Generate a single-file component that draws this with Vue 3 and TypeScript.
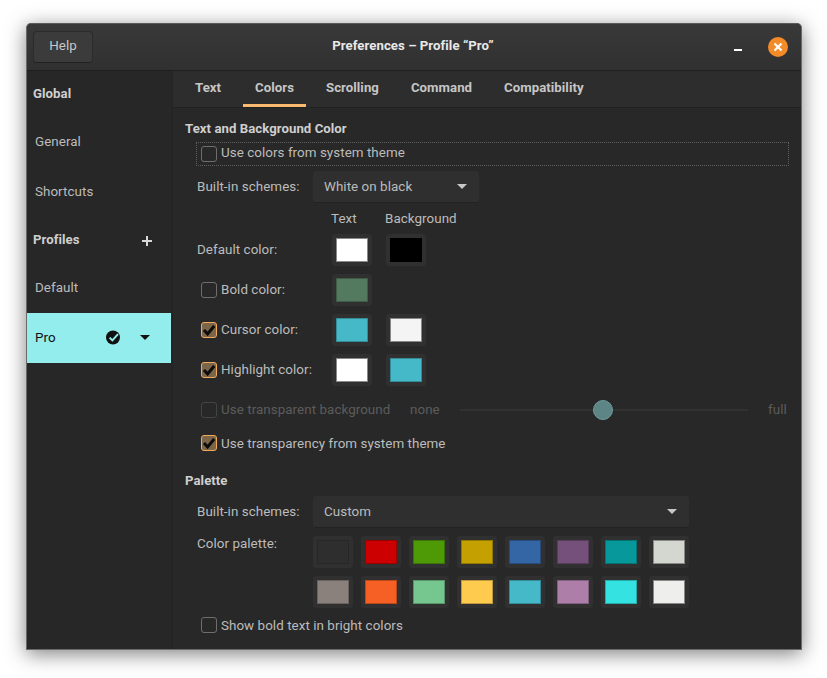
<script setup lang="ts">
interface ColorRow {
  label: string
  check: 'none' | 'off' | 'on'
  colors: string[]
}

const colorRows: ColorRow[] = [
  { label: 'Default color:', check: 'none', colors: ['#ffffff', '#000000'] },
  { label: 'Bold color:', check: 'off', colors: ['#537a5f'] },
  { label: 'Cursor color:', check: 'on', colors: ['#46b9c9', '#f4f4f4'] },
  { label: 'Highlight color:', check: 'on', colors: ['#ffffff', '#46b9c9'] },
]

const paletteRows = [
  ['#2e2e2e', '#cc0000', '#4e9a06', '#c4a000', '#3465a4', '#75507b', '#06989a', '#d3d7cf'],
  ['#8a817c', '#f66024', '#76c68f', '#ffcb4f', '#46b9c9', '#ad7fa8', '#34e2e2', '#eeeeec'],
]

const tabs = ['Text', 'Colors', 'Scrolling', 'Command', 'Compatibility']

// inner swatch border is just a darker version of the fill
function borderOf(hex: string) {
  if (hex === '#ffffff' || hex === '#f4f4f4' || hex === '#eeeeec' || hex === '#d3d7cf') return '#888888'
  if (hex === '#2e2e2e') return '#262626'
  const n = parseInt(hex.slice(1), 16)
  const r = Math.round(((n >> 16) & 255) * 0.75)
  const g = Math.round(((n >> 8) & 255) * 0.75)
  const b = Math.round((n & 255) * 0.75)
  return `rgb(${r}, ${g}, ${b})`
}
</script>

<template>
  <div class="page">
    <div class="window">
      <header class="titlebar">
        <button class="help">Help</button>
        <div class="title">Preferences – Profile “Pro”</div>
        <div class="controls">
          <span class="minimize"></span>
          <span class="close">
            <svg width="10" height="10" viewBox="0 0 10 10">
              <path d="M1.5 1.5l7 7M8.5 1.5l-7 7" stroke="#fff" stroke-width="2.2" fill="none" />
            </svg>
          </span>
        </div>
      </header>

      <div class="body">
        <aside class="sidebar">
          <div class="side-head first">Global</div>
          <div class="side-item">General</div>
          <div class="side-item">Shortcuts</div>
          <div class="side-head profiles">
            <span>Profiles</span>
            <svg class="plus" width="10" height="10" viewBox="0 0 10 10">
              <path d="M5 0v10M0 5h10" stroke="#d8d8d8" stroke-width="2" fill="none" />
            </svg>
          </div>
          <div class="side-item">Default</div>
          <div class="side-item active">
            <span class="pro-name">Pro</span>
            <svg class="pro-check" width="15" height="15" viewBox="0 0 15 15">
              <circle cx="7" cy="7.5" r="7" fill="#111" />
              <path d="M3.6 7.6l2.8 2.8 5.6-6.2" stroke="#93eded" stroke-width="2" fill="none" />
            </svg>
            <span class="pro-arrow"></span>
          </div>
        </aside>

        <main class="content">
          <nav class="tabs">
            <div v-for="t in tabs" :key="t" class="tab" :class="{ current: t === 'Colors' }">{{ t }}</div>
          </nav>

          <div class="pane">
            <div class="section-title">Text and Background Color</div>
            <div class="system-row">
              <span class="check"></span>
              <span class="lift">Use colors from system theme</span>
            </div>

            <div class="row scheme-row">
              <span class="label lift">Built-in schemes:</span>
              <div class="select small">
                <span class="lift-small">White on black</span>
                <span class="arrow"></span>
              </div>
            </div>

            <div class="col-heads">
              <span class="head-text">Text</span>
              <span>Background</span>
            </div>

            <div class="color-rows">
              <div v-for="row in colorRows" :key="row.label" class="color-row">
                <div class="color-label" :class="{ plain: row.check === 'none' }">
                  <span v-if="row.check !== 'none'" class="check" :class="{ on: row.check === 'on' }">
                    <svg v-if="row.check === 'on'" width="14" height="14" viewBox="0 0 14 14">
                      <path d="M2 7l3.6 4 6.6-8" stroke="#0c0c0c" stroke-width="3" fill="none" />
                    </svg>
                  </span>
                  <span class="lift">{{ row.label }}</span>
                </div>
                <div class="swatches">
                  <div v-for="(c, i) in row.colors" :key="i" class="swatch">
                    <div class="swatch-fill" :style="{ backgroundColor: c, borderColor: borderOf(c) }"></div>
                  </div>
                </div>
              </div>
            </div>

            <div class="slider-row">
              <span class="check disabled"></span>
              <span class="dim transparent-label lift">Use transparent background</span>
              <span class="dim none lift">none</span>
              <div class="track"><span class="thumb"></span></div>
              <span class="dim lift">full</span>
            </div>

            <div class="check-row transparency">
              <span class="check on">
                <svg width="14" height="14" viewBox="0 0 14 14">
                  <path d="M2 7l3.6 4 6.6-8" stroke="#0c0c0c" stroke-width="3" fill="none" />
                </svg>
              </span>
              <span>Use transparency from system theme</span>
            </div>

            <div class="section-title palette-title">Palette</div>

            <div class="row palette-scheme">
              <span class="label lift">Built-in schemes:</span>
              <div class="select wide">
                <span class="lift-small">Custom</span>
                <span class="arrow"></span>
              </div>
            </div>

            <div class="palette">
              <span class="label palette-label">Color palette:</span>
              <div class="palette-grid">
                <div v-for="(line, r) in paletteRows" :key="r" class="palette-line">
                  <div v-for="c in line" :key="c" class="swatch">
                    <div class="swatch-fill" :style="{ backgroundColor: c, borderColor: borderOf(c) }"></div>
                  </div>
                </div>
              </div>
            </div>

            <div class="check-row bright">
              <span class="check"></span>
              <span>Show bold text in bright colors</span>
            </div>
          </div>
        </main>
      </div>
    </div>
  </div>
</template>

<style>
html,
body {
  margin: 0;
  background: #ffffff;
}
</style>

<style scoped>
.page {
  box-sizing: border-box;
  height: 678px;
  padding: 23px 0 0 26px;
  background: #ffffff;
}

.window {
  box-sizing: border-box;
  width: 776px;
  height: 627px;
  display: flex;
  flex-direction: column;
  border: 1px solid #6a6a6a;
  border-top-color: #5a5a5a;
  border-radius: 5px 5px 0 0;
  background: #282828;
  box-shadow: 0 4px 20px rgba(0, 0, 0, 0.5);
  font-family: Roboto, "Noto Sans", sans-serif;
  font-size: 13.4px;
  letter-spacing: 0.05px;
  color: #bcbcbc;
  overflow: hidden;
}

.lift {
  padding-bottom: 2px;
}

.lift-small {
  padding-bottom: 1px;
}

.titlebar {
  flex: none;
  box-sizing: border-box;
  height: 47px;
  display: flex;
  align-items: center;
  padding: 0 8px 1px 6px;
  background: linear-gradient(#393939, #303030);
  border-bottom: 1px solid #1f1f1f;
}

.help {
  width: 60px;
  height: 32px;
  padding: 0 0 2px;
  border: 1px solid #2b2b2b;
  border-bottom-color: #222222;
  border-radius: 4px;
  background: #3b3b3b;
  color: #c8c8c8;
  font: inherit;
}

.title {
  flex: 1;
  padding-bottom: 2px;
  text-align: center;
  font-weight: 700;
  font-size: 13.2px;
  color: #e8e8e8;
}

.controls {
  width: 60px;
  display: flex;
  align-items: center;
  justify-content: space-between;
}

.minimize {
  display: block;
  width: 8px;
  height: 2px;
  margin: 7px 0 0 1px;
  background: #ffffff;
}

.close {
  width: 20px;
  height: 20px;
  margin-right: 5px;
  border-radius: 50%;
  background: #f38b29;
  display: flex;
  align-items: center;
  justify-content: center;
}

.body {
  flex: 1;
  display: flex;
  min-height: 0;
}

.sidebar {
  flex: none;
  box-sizing: border-box;
  width: 146px;
  background: #272727;
  border-right: 1px solid #232323;
}

.side-head {
  box-sizing: border-box;
  height: 46px;
  display: flex;
  align-items: center;
  padding: 0 0 2px 6px;
  font-weight: 700;
  font-size: 13.2px;
  color: #cfcfcf;
}

.profiles {
  justify-content: space-between;
  padding-right: 20px;
}

.plus {
  margin-top: 3px;
}

.side-item {
  box-sizing: border-box;
  height: 50px;
  display: flex;
  align-items: center;
  padding: 0 0 2px 8px;
}

.side-item.active {
  width: 144px;
  color: #111111;
  background: #93eded;
}

.pro-name {
  width: 71px;
}

.pro-arrow {
  margin-left: 19px;
  border-left: 5px solid transparent;
  border-right: 5px solid transparent;
  border-top: 5px solid #111111;
}

.content {
  flex: 1;
  min-width: 0;
  display: flex;
  flex-direction: column;
}

.tabs {
  flex: none;
  box-sizing: border-box;
  height: 37px;
  display: flex;
  gap: 8px;
  padding-left: 10px;
  background: #2d2d2d;
  border-bottom: 1px solid #212121;
}

.tab {
  box-sizing: border-box;
  height: 36px;
  padding: 0 12px;
  display: flex;
  align-items: center;
  font-weight: 700;
  font-size: 13.2px;
  color: #c6c6c6;
  border-bottom: 3px solid transparent;
}

.tab:first-child {
  margin-right: 2px;
}

.tab.current {
  border-bottom-color: #f9b96e;
}

.pane {
  flex: 1;
  padding: 10px 12px 0;
}

.section-title {
  height: 20px;
  line-height: 22px;
  font-weight: 700;
  font-size: 13.2px;
  color: #cfcfcf;
}

.check {
  flex: none;
  box-sizing: border-box;
  width: 16px;
  height: 16px;
  display: flex;
  align-items: center;
  justify-content: center;
  border: 1px solid #6e6e6e;
  border-radius: 3px;
}

.check.on {
  background: #7b6548;
  border-color: #f2a95c;
}

.check.disabled {
  border-color: #444444;
}

.system-row {
  box-sizing: border-box;
  height: 24px;
  margin: 4px 0 0 11px;
  width: 593px;
  display: flex;
  align-items: center;
  gap: 4px;
  padding: 0 0 1px 4px;
  border: 1px dotted #5e5e5e;
}

.row {
  display: flex;
  align-items: center;
  margin-left: 12px;
}

.scheme-row {
  margin-top: 5px;
}

.label {
  flex: none;
  width: 116px;
}

.select {
  box-sizing: border-box;
  height: 32px;
  display: flex;
  align-items: center;
  justify-content: space-between;
  padding: 0 12px 0 11px;
  background: #2f2f2f;
  border-radius: 3px;
  border-bottom: 1px solid #222222;
}

.select.small {
  width: 166px;
}

.select.wide {
  width: 376px;
}

.arrow {
  border-left: 5px solid transparent;
  border-right: 5px solid transparent;
  border-top: 5px solid #c8c8c8;
}

.col-heads {
  height: 20px;
  margin: 5px 0 0 146px;
  display: flex;
  align-items: center;
}

.head-text {
  width: 54px;
}

.color-rows {
  margin-top: 6px;
  display: flex;
  flex-direction: column;
  gap: 8px;
}

.color-row {
  display: flex;
  align-items: center;
  height: 32px;
}

.color-label {
  flex: none;
  width: 147px;
  box-sizing: border-box;
  display: flex;
  align-items: center;
  gap: 4px;
  padding-left: 16px;
}

.color-label.plain {
  padding-left: 12px;
}

.swatches {
  display: flex;
  gap: 14px;
}

.swatch {
  box-sizing: border-box;
  width: 40px;
  height: 32px;
  padding: 4px;
  background: #303030;
  border-radius: 3px;
}

.swatch-fill {
  box-sizing: border-box;
  width: 32px;
  height: 24px;
  border: 1px solid;
}

.slider-row {
  height: 24px;
  margin: 12px 0 0 16px;
  display: flex;
  align-items: center;
}

.dim {
  color: #5c5c5c;
}

.transparent-label {
  margin-left: 4px;
  width: 189px;
}

.none {
  width: 50px;
}

.track {
  position: relative;
  width: 288px;
  height: 2px;
  margin-right: 20px;
  background: #323232;
}

.thumb {
  position: absolute;
  left: 133px;
  top: -9px;
  box-sizing: border-box;
  width: 20px;
  height: 20px;
  border-radius: 50%;
  background: #5e8585;
  border: 1px solid #6f9c9c;
}

.check-row {
  display: flex;
  align-items: center;
  gap: 4px;
  height: 22px;
  margin-left: 16px;
}

.transparency {
  margin-top: 10px;
}

.palette-title {
  margin-top: 16px;
}

.palette-scheme {
  margin-top: 6px;
}

.palette {
  display: flex;
  margin: 8px 0 0 12px;
}

.palette-label {
  line-height: 16px;
}

.palette-grid {
  display: flex;
  flex-direction: column;
  gap: 8px;
}

.palette-line {
  display: flex;
  gap: 8px;
}

.bright {
  margin-top: 6px;
}
</style>
